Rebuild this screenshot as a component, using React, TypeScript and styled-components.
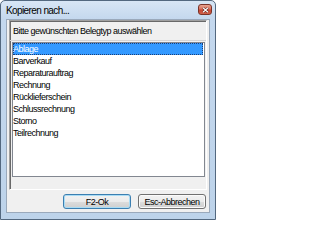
import React from "react";
import styled, { createGlobalStyle } from "styled-components";

const GlobalStyle = createGlobalStyle`
  html, body {
    margin: 0;
    padding: 0;
    background: #ffffff;
  }
  body {
    font-family: "Liberation Sans", Arial, sans-serif;
  }
`;

const belegtypen = [
  "Ablage",
  "Barverkauf",
  "Reparaturauftrag",
  "Rechnung",
  "Rücklieferschein",
  "Schlussrechnung",
  "Storno",
  "Teilrechnung",
];

const Window = styled.div`
  box-sizing: border-box;
  width: 216px;
  height: 220px;
  border: 1px solid #53687f;
  border-radius: 5px 5px 0 0;
  background: linear-gradient(180deg, #d8e6f5 0px, #c4d8ee 18px, #bdd3ea 100%);
  display: flex;
  flex-direction: column;
`;

const TitleBar = styled.div`
  height: 18px;
  flex: none;
  display: flex;
  align-items: flex-start;
  justify-content: space-between;
  padding: 3px 3px 0 5px;
  box-sizing: border-box;
`;

const Title = styled.span`
  font-size: 10px;
  line-height: 12px;
  letter-spacing: -0.6px;
  color: #000;
  margin-top: 1px;
`;

const CloseButton = styled.div`
  width: 14px;
  height: 11px;
  box-sizing: border-box;
  border: 1px solid #7a3328;
  border-radius: 3px;
  background: linear-gradient(180deg, #e9a592 0%, #d8705d 45%, #c64634 55%, #d0614b 100%);
  display: flex;
  align-items: center;
  justify-content: center;
`;

const Client = styled.div`
  flex: 1;
  margin: 0 5px 6px 5px;
  border: 1px solid #9aa9bb;
  background: #f0f0f0;
  padding: 0 2px 2px 2px;
  display: flex;
  flex-direction: column;
`;

const Panel = styled.div`
  border: 1px solid;
  border-color: #a0a0a0 #ffffff #ffffff #a0a0a0;
  box-shadow: inset 1px 1px 0 #696969;
  padding: 1px 1px 12px 2px;
  display: flex;
  flex-direction: column;
`;

const Heading = styled.div`
  height: 20px;
  box-sizing: border-box;
  border-bottom: 1px solid #d4d4d4;
  margin: -1px -1px 1px -2px;
  padding: 0 0 3px 3px;
  display: flex;
  align-items: flex-end;
  font-size: 9px;
  line-height: 12px;
  letter-spacing: -0.5px;
  color: #000;
`;

const List = styled.div`
  height: 135px;
  box-sizing: border-box;
  border: 1px solid #828790;
  background: #ffffff;
  padding: 0 1px 0 0;
`;

const Row = styled.div<{ $selected?: boolean }>`
  height: 12px;
  font-size: 9px;
  line-height: 12px;
  letter-spacing: -0.5px;
  white-space: nowrap;
  color: ${(p) => (p.$selected ? "#ffffff" : "#000000")};
  background: ${(p) => (p.$selected ? "#3399ff" : "transparent")};
  outline: ${(p) => (p.$selected ? "1px dotted #1b3f78" : "none")};
  outline-offset: -1px;
`;

const ButtonRow = styled.div`
  margin-top: 4px;
  display: flex;
  justify-content: flex-end;
  gap: 7px;
  padding-right: 1px;
`;

const Button = styled.button<{ $default?: boolean }>`
  width: 68px;
  height: 15px;
  padding: 0;
  box-sizing: border-box;
  border: 1px solid ${(p) => (p.$default ? "#3c7fb1" : "#707070")};
  border-radius: 3px;
  background: linear-gradient(180deg, #f2f2f2 0%, #ebebeb 50%, #dddddd 51%, #cfcfcf 100%);
  box-shadow: inset 0 0 0 1px ${(p) => (p.$default ? "#a9dcf5" : "#fbfbfb")};
  font-family: "Liberation Sans", Arial, sans-serif;
  font-size: 9px;
  line-height: 12px;
  letter-spacing: -0.5px;
  color: #000;
`;

const App = () => (
  <>
    <GlobalStyle />
    <Window>
      <TitleBar>
        <Title>Kopieren nach...</Title>
        <CloseButton>
          <svg width="7" height="6" viewBox="0 0 7 6">
            <path d="M1 0.8 L6 5.2 M6 0.8 L1 5.2" stroke="#5a1a12" strokeWidth="2.2" />
            <path d="M1 0.8 L6 5.2 M6 0.8 L1 5.2" stroke="#ffffff" strokeWidth="1.2" />
          </svg>
        </CloseButton>
      </TitleBar>
      <Client>
        <Panel>
          <Heading>Bitte gewünschten Belegtyp auswählen</Heading>
          <List>
            {belegtypen.map((name, i) => (
              <Row key={name} $selected={i === 0}>
                {name}
              </Row>
            ))}
          </List>
        </Panel>
        <ButtonRow>
          <Button $default>F2-Ok</Button>
          <Button>Esc-Abbrechen</Button>
        </ButtonRow>
      </Client>
    </Window>
  </>
);

export default App;
